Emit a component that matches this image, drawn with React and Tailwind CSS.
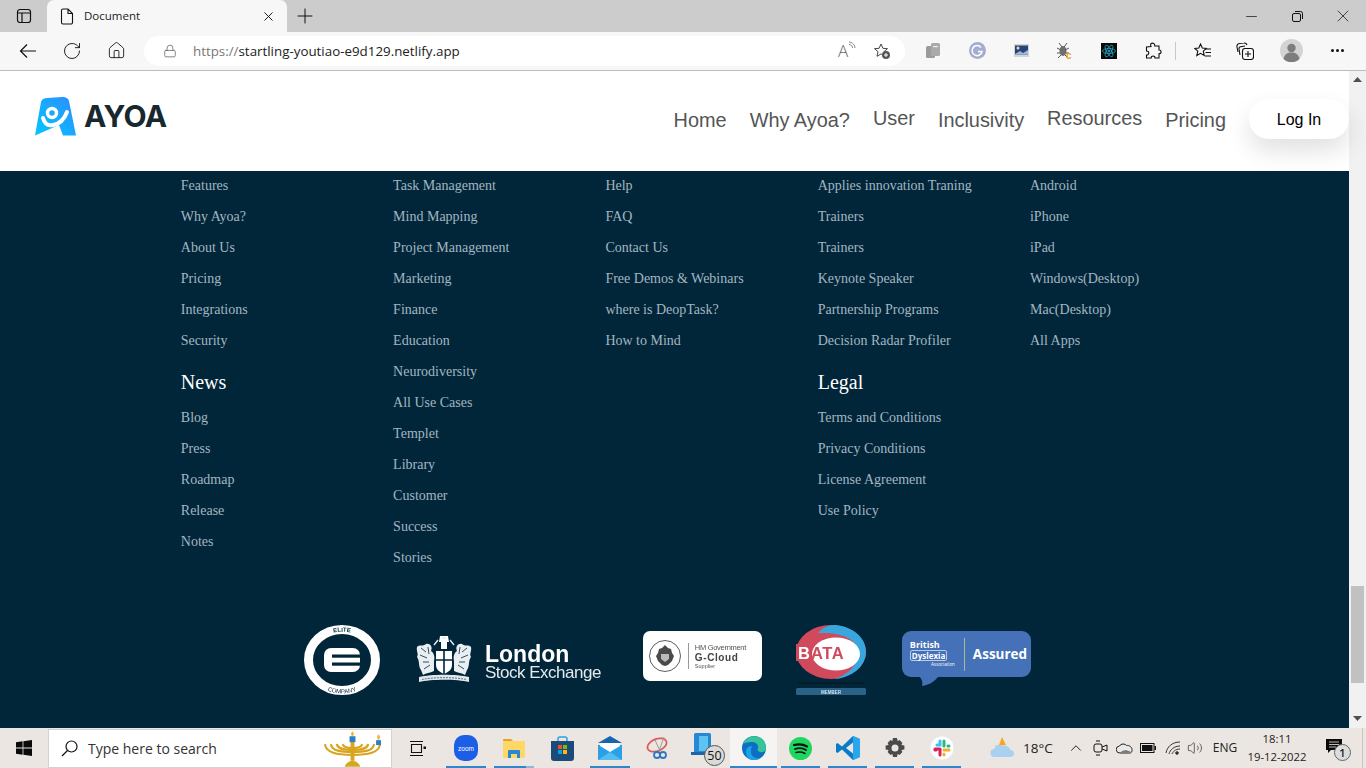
import React from "react";
import { RotateCw, Home, Lock, X, Plus, Minus, ChevronUp, Volume2 } from "lucide-react";

const cols = [
  { a: ["Features", "Why Ayoa?", "About Us", "Pricing", "Integrations", "Security"], h: "News", b: ["Blog", "Press", "Roadmap", "Release", "Notes"] },
  { a: ["Task Management", "Mind Mapping", "Project Management", "Marketing", "Finance", "Education", "Neurodiversity", "All Use Cases", "Templet", "Library", "Customer", "Success", "Stories"] },
  { a: ["Help", "FAQ", "Contact Us", "Free Demos & Webinars", "where is DeopTask?", "How to Mind"] },
  { a: ["Applies innovation Traning", "Trainers", "Trainers", "Keynote Speaker", "Partnership Programs", "Decision Radar Profiler"], h: "Legal", b: ["Terms and Conditions", "Privacy Conditions", "License Agreement", "Use Policy"] },
  { a: ["Android", "iPhone", "iPad", "Windows(Desktop)", "Mac(Desktop)", "All Apps"] },
];

function Links({ items }) {
  return items.map((t, i) => (
    <div key={i} className="h-[31px] flex items-center text-[14px] text-[#a3b6c2] whitespace-nowrap">{t}</div>
  ));
}

function FooterColumn({ c }) {
  return (
    <div className="flex flex-col">
      <Links items={c.a} />
      {c.h && <div className="h-[46px] pt-[12px] text-[20px] leading-[28px] text-white">{c.h}</div>}
      {c.b && <Links items={c.b} />}
    </div>
  );
}

function Logo() {
  return (
    <div className="flex items-center gap-[7px] ml-[35px] mb-[10px]">
      <svg width="42" height="41" viewBox="0 0 42 41">
        <defs>
          <linearGradient id="ay" x1="0" y1="1" x2="1" y2="0">
            <stop offset="0" stopColor="#00c8ff" />
            <stop offset="1" stopColor="#2f8cff" />
          </linearGradient>
        </defs>
        <path d="M0 39.500 L6 6 C7 3 9 2 12 2 L27 1 C31 1 33 2 34 5 L41 39.500 L28 39.500 L24 29 Z" fill="url(#ay)" />
        <circle cx="17" cy="17" r="4.500" fill="none" stroke="#fff" strokeWidth="3.500" />
        <path d="M8 22 C10 29 14 30 18 29 C25 28 29 24 32 16" fill="none" stroke="#fff" strokeWidth="4" strokeLinecap="round" />
      </svg>
      <span className="text-[30px] leading-none font-bold text-[#17282e] font-['Inter'] tracking-[-0.6px]">AYOA</span>
    </div>
  );
}

function Nav() {
  const items = [["Home", ""], ["Why Ayoa?", ""], ["User", "pb-1"], ["Inclusivity", ""], ["Resources", "pb-1"], ["Pricing", ""]];
  return (
    <nav className="flex items-center gap-[23px] text-[19.900px] text-[#555] font-['Liberation_Sans']">
      {items.map(([t, c]) => <span key={t} className={c}>{t}</span>)}
      <span className="w-[100px] h-10 -mt-1 pt-px rounded-[20px] bg-white shadow-[0_12px_24px_rgba(0,0,0,0.12)] flex items-center justify-center text-[16px] text-black">Log In</span>
    </nav>
  );
}

function EliteLogo() {
  return (
    <svg width="76" height="70" viewBox="0 0 76 70">
      <defs>
        <path id="eTop" d="M6 35 A32 28.500 0 0 1 70 35" />
        <path id="eBot" d="M2 35 A36 33.500 0 0 0 74 35" />
      </defs>
      <ellipse cx="38" cy="35" rx="33.500" ry="30.500" fill="none" stroke="#fff" strokeWidth="9" />
      <rect x="20" y="23" width="36" height="24" rx="7" fill="#fff" />
      <rect x="28" y="29.500" width="28" height="3.200" fill="#012639" />
      <rect x="28" y="37.500" width="28" height="3.200" fill="#012639" />
      <text fontSize="6" fontWeight="700" fill="#012639" fontFamily="Liberation Sans" textAnchor="middle"><textPath href="#eTop" startOffset="50%">ELITE</textPath></text>
      <text fontSize="6" fill="#012639" fontFamily="Liberation Sans" textAnchor="middle"><textPath href="#eBot" startOffset="50%">COMPANY</textPath></text>
    </svg>
  );
}

function Crest() {
  return (
    <svg width="56" height="50" viewBox="0 0 56 50">
      <path d="M24 1h8l1 6h-10z M25 7h6v7h-6z" fill="#fff" />
      <path d="M22 5l-4 5M34 5l4 5M26 3h4" stroke="#dfe7eb" strokeWidth="1.500" />
      <path d="M1 12 C3 9 7 12 10 9 C14 8 17 12 15 16 C18 18 19 22 18 26 L18 36 C14 38 10 38 7 40 L5 35 C2 31 4 26 1 22 C3 19 0 16 1 12z" fill="#e8eef1" />
      <path d="M55 12 C53 9 49 12 46 9 C42 8 39 12 41 16 C38 18 37 22 38 26 L38 36 C42 38 46 38 49 40 L51 35 C54 31 52 26 55 22 C53 19 56 16 55 12z" fill="#e8eef1" />
      <path d="M20 16h16v14c0 5-4 7-8 9-4-2-8-4-8-9z" fill="#fff" />
      <path d="M28 16v23M20 25h16" stroke="#012639" strokeWidth="1.600" />
      <path d="M5 13l5 4M51 13l-5 4M4 20l7 3M52 20l-7 3M7 27l6 0M49 27l-6 0M8 34l6-4M48 34l-6-4M12 12l1 7M44 12l-1 7" stroke="#012639" strokeWidth="0.800" />
      <path d="M3 42 C15 39 41 39 53 42 L53 47 C41 44 15 44 3 47z" fill="#dfe7eb" />
      <path d="M6 44.500C18 42 38 42 50 44.500" stroke="#012639" strokeWidth="0.600" strokeDasharray="2 1" fill="none" />
    </svg>
  );
}

function London() {
  return (
    <div className="flex items-center ml-[36px]">
      <Crest />
      <div className="ml-[13px] font-['Liberation_Sans'] text-white">
        <div className="text-[23px] font-bold leading-[22px] mt-[3px]">London</div>
        <div className="text-[17px] leading-[15px] tracking-[-0.500px] text-[#e5eaed]">Stock Exchange</div>
      </div>
    </div>
  );
}

function GCloud() {
  return (
    <div className="ml-[42px] -mt-[8px] w-[119px] h-[50px] bg-white rounded-[7px] flex items-center pl-[5px] font-['Liberation_Sans']">
      <svg width="34" height="34" viewBox="0 0 34 34">
        <circle cx="17" cy="17" r="15.500" fill="none" stroke="#333" strokeWidth="0.800" />
        <path d="M17 6l3 3 3 1 1 4 2 3-2 5-4 4-3 1-3-1-4-4-2-5 2-3 1-4 3-1z" fill="#4a4a4a" />
        <path d="M13 15h8v5l-4 3-4-3z" fill="#bbb" />
      </svg>
      <div className="w-px h-[26px] bg-[#999] mx-[6px]" />
      <div className="flex flex-col text-[#555]">
        <span className="text-[7.500px] leading-[9px] whitespace-nowrap tracking-[-0.300px]">HM Government</span>
        <span className="text-[10px] leading-[11px] font-bold tracking-[0.600px] text-[#444]">G-Cloud</span>
        <span className="text-[5.500px] leading-[7px]">Supplier</span>
      </div>
    </div>
  );
}

function Bata() {
  return (
    <svg width="70" height="70" viewBox="0 0 70 70" className="ml-[34px]">
      <ellipse cx="35" cy="27" rx="35" ry="27" fill="#d04a5c" />
      <path d="M38 0C56 1 70 12 70 27C70 41 56 53 38 54C52 50 62 40 62 28C62 15 48 7 22 8C26 3 32 0 38 0z" fill="#38a7dd" />
      <ellipse cx="40" cy="29" rx="24" ry="16.500" fill="#fff" />
      <rect x="0" y="19" width="16" height="17" fill="#d04a5c" />
      <text x="2" y="34" fontSize="16.500" fontWeight="700" fontFamily="Liberation Sans" fill="#fff">B</text>
      <text x="15" y="34" fontSize="16.500" fontWeight="700" fontFamily="Liberation Sans" fill="#d04a5c" letterSpacing="0.600">ATA</text>
      <rect x="2" y="57" width="66" height="1.400" fill="#0a1a22" />
      <rect x="0" y="63" width="70" height="7" rx="1.500" fill="#2b6388" />
      <text x="35" y="68.500" fontSize="4.500" fontWeight="700" fontFamily="Liberation Sans" fill="#cfe0ea" textAnchor="middle">MEMBER</text>
    </svg>
  );
}

function Dyslexia() {
  return (
    <div className="relative ml-9 w-[129px] h-[46px] -mt-[12px] bg-[#4471b7] rounded-[9px] flex items-center pl-2 font-['Open_Sans'] text-white">
      <div className="flex flex-col w-[47px]">
        <span className="text-[9px] leading-[10px] font-bold">British</span>
        <span className="text-[8px] leading-[9px] font-bold border border-[#b9cbe6] rounded-[2px] px-px w-fit">Dyslexia</span>
        <span className="text-[4.500px] leading-[7px] text-right pr-[2px]">Association</span>
      </div>
      <div className="w-px h-[33px] bg-[#a9b98e] ml-[7px]" />
      <span className="ml-2 text-[13.500px] font-bold">Assured</span>
      <svg className="absolute left-[17px] top-[45px]" width="20" height="11" viewBox="0 0 20 11"><path d="M0 0h20C15 6 10 9 3 10 4 6 3 3 0 0z" fill="#4471b7" /></svg>
    </div>
  );
}

function Footer() {
  return (
    <div className="flex-1 bg-[#012639] font-['Liberation_Serif'] overflow-hidden">
      <div className="grid grid-cols-[212.300px_212.300px_212.300px_212.300px_212.300px] pl-[180.800px] -mt-px">
        {cols.map((c, i) => <FooterColumn key={i} c={c} />)}
      </div>
      <div className="flex items-center h-[70px] mt-[52px] pl-[304px] blur-[0.4px]">
        <EliteLogo />
        <London />
        <GCloud />
        <Bata />
        <Dyslexia />
      </div>
    </div>
  );
}

function Scrollbar() {
  return (
    <div className="w-[17px] bg-[#f1f1f1] flex flex-col items-center">
      <svg className="mt-[6px]" width="9" height="6" viewBox="0 0 9 6"><path d="M4.500 0L9 5H0z" fill="#505050" /></svg>
      <div className="w-[13px] h-[97px] bg-[#c1c1c1] mt-[503px]" />
      <svg className="mt-auto mb-[6px]" width="9" height="6" viewBox="0 0 9 6"><path d="M0 0h9L4.500 5z" fill="#505050" /></svg>
    </div>
  );
}

function TabBar() {
  return (
    <div className="h-8 bg-[#cccccc] flex items-center shrink-0">
      <div className="w-[47px] flex justify-center">
        <svg width="16" height="16" viewBox="0 0 16 16" fill="none" stroke="#111" strokeWidth="1.200"><rect x="1.500" y="1.500" width="13" height="13" rx="2.500" /><path d="M1.500 5h13M6 5v9.500" /></svg>
      </div>
      <div className="w-60 h-8 bg-[#f7f7f7] rounded-t-[7px] flex items-center pl-[13px] pr-[11px]">
        <svg width="14" height="17" viewBox="0 0 14 17" fill="none" stroke="#111" strokeWidth="1.100"><path d="M1.500 2.500a1.500 1.500 0 0 1 1.500-1.500h5l4.500 4.500v9a1.500 1.500 0 0 1-1.500 1.500H3a1.500 1.500 0 0 1-1.500-1.500z M8 1v4.500h4.500" /></svg>
        <span className="ml-[10px] flex-1 text-[11.500px] text-[#222] font-['Open_Sans']">Document</span>
        <X size={15} strokeWidth={1.500} color="#111" />
      </div>
      <div className="ml-[6px]"><Plus size={24} strokeWidth={1} color="#111" /></div>
      <div className="ml-auto flex items-center">
        <div className="w-[46px] flex justify-center"><Minus size={17} strokeWidth={1} color="#111" /></div>
        <div className="w-[46px] flex justify-center">
          <svg width="11" height="11" viewBox="0 0 11 11" fill="none" stroke="#111" strokeWidth="1"><rect x="0.500" y="2.500" width="8" height="8" rx="1.500" /><path d="M3 0.500h5.500a2 2 0 0 1 2 2V8" /></svg>
        </div>
        <div className="w-[46px] flex justify-center"><X size={20} strokeWidth={0.900} color="#111" /></div>
      </div>
    </div>
  );
}

function ToolIcon({ children, w = "w-11" }) {
  return <div className={`${w} flex justify-center items-center`}>{children}</div>;
}

function Toolbar() {
  return (
    <div className="h-[39px] bg-[#f7f7f7] border-b border-[#bdbdbd] flex items-center pb-px shrink-0 pl-[6px]">
      <ToolIcon>
        <svg width="18" height="16" viewBox="0 0 18 16" fill="none" stroke="#111" strokeWidth="1.200"><path d="M17 8H1.500M8 1.500L1.500 8 8 14.500" /></svg>
      </ToolIcon>
      <ToolIcon><RotateCw size={20} strokeWidth={1.100} color="#111" /></ToolIcon>
      <ToolIcon><Home size={19} strokeWidth={1.100} color="#111" /></ToolIcon>
      <div className="w-[761px] h-[30px] ml-[6px] bg-white rounded-full flex items-center pl-[19px] pr-[14px] font-['Open_Sans'] text-[13.350px]">
        <Lock size={14} strokeWidth={1.200} color="#555" />
        <span className="ml-[16px] pt-px flex-1 whitespace-nowrap"><span className="text-[#777]">https://</span><span className="text-[#222]">startling-youtiao-e9d129.netlify.app</span></span>
        <span className="text-[17px] leading-none text-[#666] w-[18px] relative font-light">A<svg className="absolute -top-[1px] left-[10px]" width="9" height="9" viewBox="0 0 9 9" fill="none" stroke="#666" strokeWidth="0.800"><path d="M1 1c3 0 6 3 6 6M1 3.500c2 0 3.500 1.500 3.500 3.500" /></svg></span>
        <div className="w-[18px] ml-[17px]">
          <svg width="18" height="18" viewBox="0 0 18 18"><path d="M8 2l1.900 4.300 4.600.4-3.500 3 1 4.600-4-2.400-4 2.400 1-4.600-3.500-3 4.600-.4z" fill="none" stroke="#444" strokeWidth="1" /><circle cx="13" cy="13" r="4" fill="#555" /><path d="M11 13h4M13 11v4" stroke="#fff" strokeWidth="1" /></svg>
        </div>
      </div>
      <div className="flex items-center ml-[6px]">
        <ToolIcon>
          <svg width="15" height="16" viewBox="0 0 15 16"><rect x="0" y="3" width="9" height="12" rx="1.500" fill="#9b9b9b" /><rect x="5" y="0" width="9" height="13" rx="1.500" fill="#aaa" /><rect x="7" y="3" width="5" height="1.200" fill="#eee" /></svg>
        </ToolIcon>
        <ToolIcon>
          <svg width="17" height="17" viewBox="0 0 17 17"><circle cx="8.500" cy="8.500" r="8.500" fill="#a4add0" /><path d="M12 5.500a5 5 0 1 0 1 4H9" fill="none" stroke="#fff" strokeWidth="1.500" /></svg>
        </ToolIcon>
        <ToolIcon>
          <svg width="15" height="13" viewBox="0 0 15 13"><rect width="15" height="13" fill="#d5d5d5" /><rect x="1" y="1.500" width="13" height="9" fill="#26457a" /><circle cx="4" cy="4" r="1.500" fill="#f5d98b" /><path d="M1 10l5-3 3 2 5-3v4.500H1z" fill="#9fb8d8" /></svg>
        </ToolIcon>
        <ToolIcon>
          <svg width="18" height="18" viewBox="0 0 18 18"><ellipse cx="7" cy="9" rx="3.500" ry="5" fill="#6e6e6e" /><path d="M3 1l3 4M11 1L8 5M1 6l4 2M13 6L9 8M1 11h3M13 11h-3M2 16l3-3M12 16l-3-3" stroke="#555" strokeWidth="1" /><text x="10" y="17" fontSize="10" fontWeight="700" fill="#f39a23" fontFamily="Liberation Sans">c</text></svg>
        </ToolIcon>
        <ToolIcon>
          <svg width="16" height="16" viewBox="0 0 16 16"><rect width="16" height="16" fill="#0a0a0a" /><g fill="none" stroke="#28b6c9" strokeWidth="0.700"><ellipse cx="8" cy="8" rx="6.500" ry="2.500" /><ellipse cx="8" cy="8" rx="6.500" ry="2.500" transform="rotate(60 8 8)" /><ellipse cx="8" cy="8" rx="6.500" ry="2.500" transform="rotate(120 8 8)" /></g><circle cx="8" cy="8" r="1.500" fill="#2a7fd6" /></svg>
        </ToolIcon>
        <ToolIcon>
          <svg width="18" height="18" viewBox="0 0 18 18" fill="none" stroke="#111" strokeWidth="1.100"><path d="M7 1.500c2-1 4 0 3.800 2.500H15v4c2.500-.2 3 3.500 0 3.800V16h-4c.2-2.700-4-2.700-3.800 0H2.500v-3c2.500.5 3.500-4 0-4V5L7 4.500c-.5-1 -.5-2.200 0-3z" /></svg>
        </ToolIcon>
        <div className="w-px h-[18px] bg-[#c8c8c8]" />
        <div className="w-[50px] flex justify-center pl-1">
          <svg width="18" height="18" viewBox="0 0 18 18" fill="none" stroke="#111" strokeWidth="1.100"><path d="M6.500 2l1.800 4 4 .4-3 2.800.9 4.300-3.700-2.200L2.800 13.500l1-4.300-3-2.800 4-.4z" /><path d="M11 7h6M11.500 10.500H17M11 14h6" /></svg>
        </div>
        <ToolIcon w="w-[38px]">
          <svg width="18" height="18" viewBox="0 0 18 18" fill="none" stroke="#111" strokeWidth="1.100"><path d="M2 10l-1-5a3 3 0 0 1 2.200-3.500L8 1c1.500-.2 2.500.5 3 2" /><path d="M4 13L3 7c-.2-1 .5-2 1.500-2.200L9 4" /><rect x="6.500" y="6.500" width="11" height="11" rx="2.500" /><path d="M12 9v6M9 12h6" /></svg>
        </ToolIcon>
        <div className="w-[54px] flex justify-center">
          <svg width="23" height="23" viewBox="0 0 23 23"><circle cx="11.500" cy="11.500" r="11.500" fill="#d3d3d3" /><circle cx="11.500" cy="9" r="4.200" fill="#7d7d7d" /><path d="M3.500 20c1-5 4-6.500 8-6.500s7 1.500 8 6.500a11.500 11.500 0 0 1-16 0z" fill="#7d7d7d" /></svg>
        </div>
        <div className="w-[38px] flex justify-center gap-[2px]">
          <span className="w-[3px] h-[3px] rounded-full bg-[#111]" /><span className="w-[3px] h-[3px] rounded-full bg-[#111]" /><span className="w-[3px] h-[3px] rounded-full bg-[#111]" />
        </div>
      </div>
    </div>
  );
}

function Menorah() {
  return (
    <svg width="57" height="36" viewBox="0 0 58 36" className="shrink-0">
      <g fill="none" stroke="#d9a520" strokeWidth="2.200">
        <path d="M1 13c1 9 12 11 28 11s27-2 28-11" />
        <path d="M7 13c1 7 10 8 22 8s21-1 22-8" />
        <path d="M13 13c1 5 7 6 16 6s15-1 16-6" />
        <path d="M19 13c1 3 5 4 10 4s9-1 10-4" />
      </g>
      <rect x="27" y="8" width="4" height="22" fill="#d9a520" />
      <path d="M21 36c1-4 6-6 8-6s7 2 8 6z" fill="#d9a520" />
      <rect x="26" y="5" width="6" height="6" fill="#2f7fc4" />
      <path d="M29 0c2 2 2 4 0 5-2-1-2-3 0-5z" fill="#f3b23c" />
      <rect x="53" y="9" width="5" height="5" fill="#2f7fc4" />
      <path d="M55.500 3c2 2 2 4 0 6-2-2-2-4 0-6z" fill="#f3b23c" />
    </svg>
  );
}

function Slot({ children, u, active, w = "w-12", cut }) {
  return (
    <div className={`${w} shrink-0 h-10 relative flex items-center justify-center ${active ? "bg-[#f6f4f2]" : ""}`}>
      {children}
      {u && <div className={`absolute bottom-0 h-[2px] bg-[#2b88cf] ${active ? "left-0 right-0" : "left-1 right-1"}`} />}
      {cut && <div className="absolute bottom-0 right-1 w-2 h-[2px] bg-[#8db8dc]" />}
    </div>
  );
}

function Taskbar() {
  return (
    <div className="h-10 bg-[#ebe6e1] flex items-center shrink-0 relative font-['Open_Sans'] text-[#222]">
      <div className="w-12 shrink-0 flex justify-center pr-[1px]">
        <svg width="16" height="16" viewBox="0 0 16 16" fill="#0a0a0a"><path d="M0 2.300L6.600 1.300V7.600H0zM7.400 1.200L16 0V7.600H7.400zM0 8.400H6.600V14.700L0 13.700zM7.400 8.400H16V16L7.400 14.800z" /></svg>
      </div>
      <div className="w-[344px] shrink-0 h-[39px] mt-px bg-white border border-[#d2d2d2] flex items-center pl-[12px] pr-[10px]">
        <svg width="17" height="17" viewBox="0 0 17 17" fill="none" stroke="#111" strokeWidth="1.200"><circle cx="10.500" cy="6.500" r="5.500" /><path d="M6.500 10.500L1 16" /></svg>
        <span className="ml-[10px] flex-1 text-[14px] text-[#333]">Type here to search</span>
        <Menorah />
      </div>
      <div className="w-[50px] shrink-0 flex justify-center">
        <svg width="17" height="15" viewBox="0 0 17 15" fill="none" stroke="#111" strokeWidth="1.100"><path d="M1 0.500h13M1 14.500h13M2.500 3.500h10v8h-10z" /><rect x="14.500" y="5.500" width="2.500" height="2.500" fill="#111" stroke="none" /></svg>
      </div>
      <Slot u>
        <svg width="24" height="26" viewBox="0 0 24 26"><rect width="24" height="26" rx="10" fill="#1c5fe6" /><text x="12" y="15.500" fontSize="6.500" fill="#fff" textAnchor="middle" fontFamily="Liberation Sans">zoom</text></svg>
      </Slot>
      <Slot u cut>
        <svg width="22" height="20" viewBox="0 0 22 20"><path d="M0 2a1 1 0 0 1 1-1h7l2 2H0z" fill="#e0a526" /><rect y="3" width="22" height="17" rx="1" fill="#ffd766" /><path d="M5 20v-7a1 1 0 0 1 1-1h10a1 1 0 0 1 1 1v7h-3v-4H8v4z" fill="#2a88cf" /></svg>
      </Slot>
      <Slot>
        <svg width="23" height="25" viewBox="0 0 23 25"><path d="M7 6V3a2 2 0 0 1 2-2h5a2 2 0 0 1 2 2v3" fill="none" stroke="#2ea3e0" strokeWidth="1.500" /><path d="M0 5h23v17a3 3 0 0 1-3 3H3a3 3 0 0 1-3-3z" fill="#1c4a7a" /><rect x="7" y="9" width="4" height="4" fill="#f25022" /><rect x="12" y="9" width="4" height="4" fill="#7fba00" /><rect x="7" y="14" width="4" height="4" fill="#00a4ef" /><rect x="12" y="14" width="4" height="4" fill="#ffb900" /></svg>
      </Slot>
      <Slot u>
        <svg width="24" height="24" viewBox="0 0 24 24"><path d="M0 7L12 0l12 7z" fill="#1565b0" /><path d="M0 9h24v15H0z" fill="#2aa0e6" /><path d="M2 7h20v3l-10 6-10-6z" fill="#fff" /><path d="M0 24l12-8 12 8z" fill="#52bdf0" /></svg>
      </Slot>
      <Slot>
        <svg width="24" height="24" viewBox="0 0 24 24" fill="none"><ellipse cx="11" cy="9" rx="10" ry="6" transform="rotate(-22 11 9)" stroke="#dc5c5c" strokeWidth="1.800" /><path d="M9 4l5 11M18 1l-5 14" stroke="#999" strokeWidth="1" /><circle cx="11" cy="19" r="3" stroke="#2f78c0" strokeWidth="1.800" /><circle cx="17" cy="19" r="3" stroke="#2f78c0" strokeWidth="1.800" /></svg>
      </Slot>
      <Slot>
        <div className="relative w-8 h-8">
          <svg className="absolute left-[1px] top-[1px]" width="23" height="23" viewBox="0 0 23 23"><rect x="3" y="0" width="17" height="21" rx="1.500" fill="#2787d6" /><rect x="8" y="3" width="9" height="15" fill="#5ec3ee" /><rect x="0" y="19" width="14" height="3" fill="#1e64a8" /></svg>
          <span className="absolute left-[14px] top-[13px] w-[21px] h-[21px] rounded-full border border-[#555] bg-[#dadada] text-[12.500px] leading-[19px] text-center text-[#111]">50</span>
        </div>
      </Slot>
      <Slot u active w="w-[47px]">
        <svg width="24" height="24" viewBox="0 0 24 24"><circle cx="12" cy="12" r="12" fill="#0d6fc2" /><path d="M1 8C4 1 11-1 17 1c5 2 7 7 7 11 0 3-3 5-6 4-2-.6-3-2-2-4 1-3-2-6-6-6-4 0-8 1-9 2z" fill="#36c59a" /><path d="M9 16c0 4 4 7 9 6-2 1-4 2-6 2-5 0-8-3-8-8 0-4 3-6 6-6-1 2-1 4-1 6z" fill="#1aa3e8" /></svg>
      </Slot>
      <Slot u w="w-[47px]">
        <svg width="23" height="23" viewBox="0 0 23 23"><circle cx="11.500" cy="11.500" r="11.500" fill="#1ed760" /><g fill="none" stroke="#111" strokeLinecap="round"><path d="M5 8c4-1 9-1 13 1.500" strokeWidth="2.200" /><path d="M6 12c3-1 8-1 11 1" strokeWidth="1.800" /><path d="M7 15.500c3-.7 6-.5 9 1" strokeWidth="1.500" /></g></svg>
      </Slot>
      <Slot u w="w-[47px]">
        <svg width="24" height="24" viewBox="0 0 24 24"><path d="M17 0l7 3v18l-7 3L6 13.500 1.500 17 0 16V8l1.500-1L6 10.500z" fill="#0a7cc7" /><path d="M17 0l7 3v18l-7 3z" fill="#2ba6ec" /><path d="M17 6.500v11L10 12z" fill="#ebe6e1" /></svg>
      </Slot>
      <Slot u w="w-[47px]">
        <svg width="20" height="20" viewBox="0 0 20 20"><path d="M8 0h4l.6 3 2-.9 2.800 2.800-1 2 3 .6v4l-3 .6 1 2-2.800 2.800-2-1-.6 3H8l-.6-3-2 1-2.800-2.800 1-2-3-.6V7.500l3-.6-1-2 2.800-2.800 2 .9z" fill="#4a4a4a" /><circle cx="10" cy="10" r="3.500" fill="#ebe6e1" /></svg>
      </Slot>
      <Slot u w="w-[47px]">
        <svg width="24" height="24" viewBox="0 0 24 24"><circle cx="12" cy="12" r="12" fill="#fff" stroke="#ddd" strokeWidth="0.500" /><g strokeWidth="3" strokeLinecap="round"><path d="M10 5v4H7" stroke="#36c5f0" fill="none" /><path d="M5 13h5" stroke="#e01e5a" /><path d="M14 5v5M19 10h-1" stroke="#2eb67d" /><path d="M14 14h5M14 19v-1" stroke="#ecb22e" /><path d="M10 14v5M5 14h1" stroke="#e01e5a" /></g></svg>
      </Slot>
      <div className="ml-[25px] shrink-0 flex items-center">
        <svg width="25" height="24" viewBox="0 0 25 24"><path d="M3 10L9 9l3-8 4 8z" fill="#f5a623" /><path d="M5 21a4 4 0 0 1-1-8c1-4 6-5 9-3 3-1 7 1 7 4 3 0 4 2 4 4s-2 3-4 3z" fill="#a9d0f0" /></svg>
        <span className="ml-[8px] w-[44px] text-[13.500px]">18°C</span>
      </div>
      <ChevronUp size={18} strokeWidth={1.200} color="#111" className="shrink-0" />
      <div className="ml-[3px] w-[24px] shrink-0 flex justify-center">
        <svg width="15" height="18" viewBox="0 0 15 18" fill="none" stroke="#111" strokeWidth="1"><rect x="1" y="5" width="8" height="8" rx="2" /><path d="M9 8l5-2v6l-5-2M3 2h4M3 16h4" /></svg>
      </div>
      <div className="w-[24px] shrink-0 flex justify-center">
        <svg width="17" height="11" viewBox="0 0 17 11"><path d="M4 10a3.500 3.500 0 0 1-.5-7C5 .5 9 .5 10.500 2.500c3-.5 6 2 5.500 5 0 1.500-1 2.500-2 2.500z" fill="#e9e9e9" stroke="#222" strokeWidth="1" /><path d="M4 10c2-3 6-4 11-1" fill="#777" /></svg>
      </div>
      <div className="w-[24px] shrink-0 flex justify-center">
        <svg width="16" height="10" viewBox="0 0 16 10"><rect x="0.500" y="0.500" width="13.500" height="9" fill="none" stroke="#111" /><rect x="2" y="2" width="10.500" height="6" fill="#111" /><rect x="14.500" y="3" width="1.500" height="4" fill="#111" /></svg>
      </div>
      <div className="w-[25px] shrink-0 flex justify-center">
        <svg width="16" height="14" viewBox="0 0 16 14" fill="none" stroke="#333" strokeWidth="1"><path d="M1 12C2 6 7 1 15 1M4 13c1-4 5-8 11-8M7 13c1-2 3-5 8-5" /><circle cx="12" cy="12" r="1.300" fill="#333" /></svg>
      </div>
      <div className="w-[19px] shrink-0 flex justify-center"><Volume2 size={16} strokeWidth={1} color="#222" /></div>
      <span className="ml-[4px] w-[34px] shrink-0 text-center text-[12px]">ENG</span>
      <div className="ml-[3px] w-[64px] shrink-0 flex flex-col items-center text-[11.300px] leading-[18px]">
        <span>18:11</span>
        <span className="whitespace-nowrap">19-12-2022</span>
      </div>
      <div className="ml-[16px] w-[30px] shrink-0 h-10 relative">
        <svg className="absolute left-px top-[11px]" width="16" height="15" viewBox="0 0 16 15"><path d="M0 0h16v11H5l-3 3v-3H0z" fill="#0a0a0a" /><path d="M3 3h10M3 5.500h10M3 8h7" stroke="#ebe6e1" strokeWidth="0.800" /></svg>
        <span className="absolute left-[9px] top-[16px] w-[17px] h-[17px] rounded-full border border-[#666] bg-[#dcdcdc] text-[11px] leading-[15px] text-center font-semibold">1</span>
      </div>
      <div className="absolute right-[3px] top-0 w-px h-10 bg-[#c9c5c0]" />
    </div>
  );
}

export default function App() {
  return (
    <div className="w-[1366px] h-[768px] flex flex-col overflow-hidden bg-white">
      <TabBar />
      <Toolbar />
      <div className="flex-1 flex min-h-0">
        <div className="flex-1 flex flex-col min-w-0">
          <header className="h-[100px] bg-white flex items-center justify-between relative z-10 shrink-0">
            <Logo />
            <Nav />
          </header>
          <Footer />
        </div>
        <Scrollbar />
      </div>
      <Taskbar />
    </div>
  );
}
